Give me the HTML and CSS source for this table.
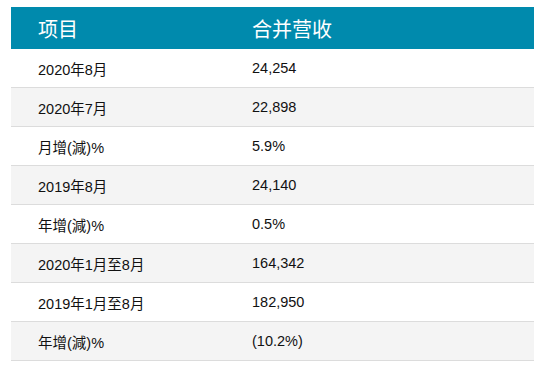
FILE: index.html
```html
<!DOCTYPE html>
<html lang="zh">
<head>
<meta charset="utf-8">
<link rel="stylesheet" href="styles.css">
</head>
<body>
<table class="rev">
  <thead>
    <tr><th class="c1">项目</th><th>合并营收</th></tr>
  </thead>
  <tbody>
    <tr><td class="c1">2020年8月</td><td>24,254</td></tr>
    <tr><td class="c1">2020年7月</td><td>22,898</td></tr>
    <tr><td class="c1">月增(減)%</td><td>5.9%</td></tr>
    <tr><td class="c1">2019年8月</td><td>24,140</td></tr>
    <tr><td class="c1">年增(減)%</td><td>0.5%</td></tr>
    <tr><td class="c1">2020年1月至8月</td><td>164,342</td></tr>
    <tr><td class="c1">2019年1月至8月</td><td>182,950</td></tr>
    <tr><td class="c1">年增(減)%</td><td>(10.2%)</td></tr>
  </tbody>
</table>
</body>
</html>
```
FILE: styles.css
```css
body {
  margin: 0;
  padding: 7px 20px 0 11px;
  background: #fff;
  font-family: "Liberation Sans", "Noto Sans CJK TC", sans-serif;
}
.rev {
  width: 523px;
  border-collapse: collapse;
  table-layout: fixed;
}
.rev th {
  background: #008aad;
  color: #fff;
  font-weight: normal;
  font-size: 20px;
  text-align: left;
  height: 42px;
  padding: 0 0 0 27px;
}
.rev .c1 { width: 187px; }
.rev td {
  height: 38px;
  padding: 0 0 0 27px;
  font-size: 14.5px;
  color: #111;
  border-bottom: 1px solid #dcdcdc;
}
.rev tbody tr:nth-child(even) td { background: #f4f4f4; }
```
